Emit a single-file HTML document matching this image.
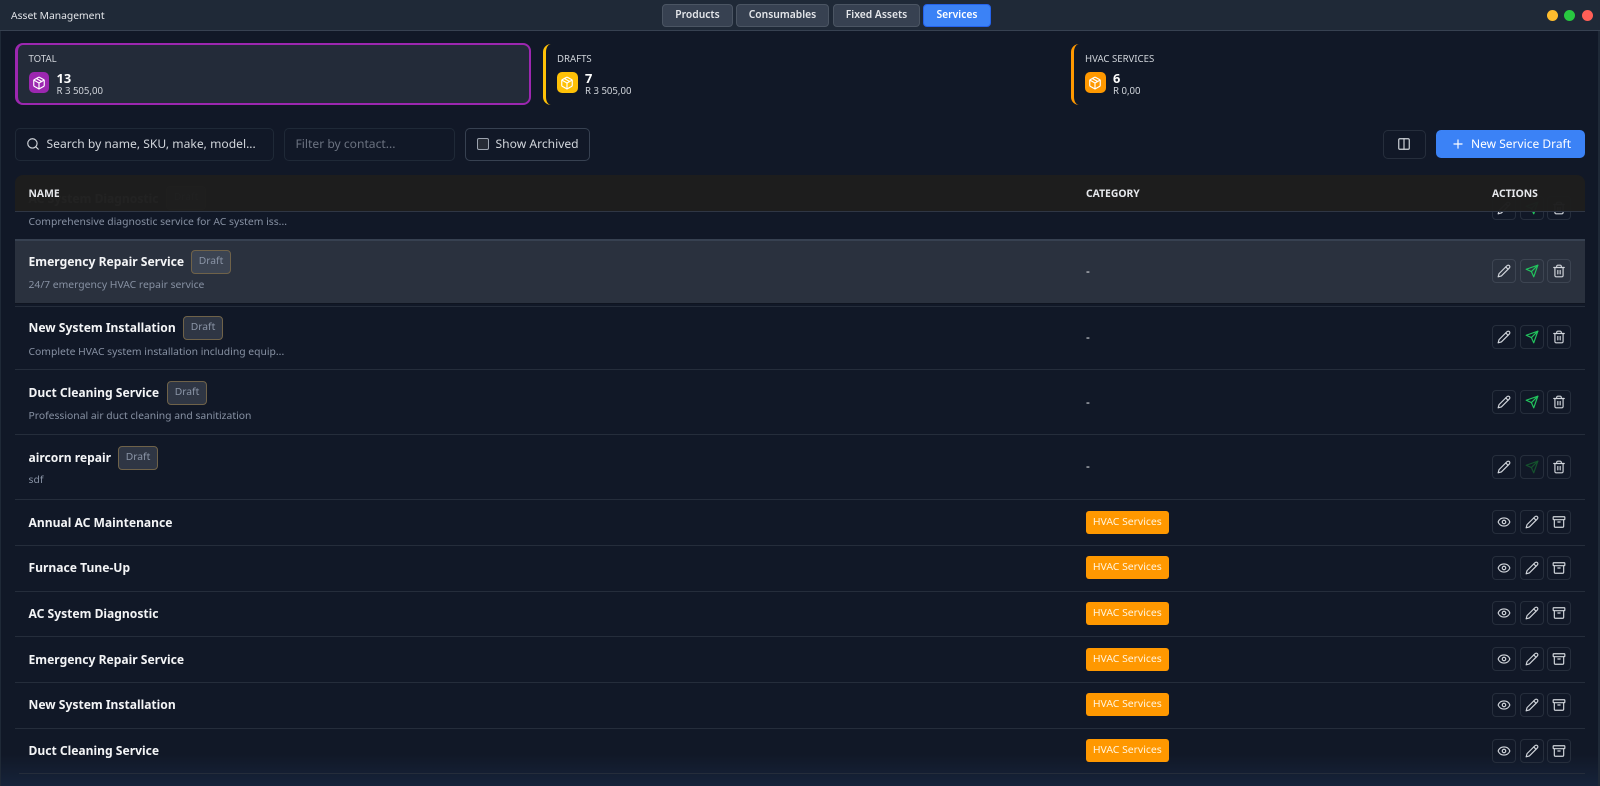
<!DOCTYPE html>
<html><head><meta charset="utf-8"><title>Asset Management</title>
<style>
*{box-sizing:border-box}
html,body{margin:0;padding:0;width:1600px;height:786px;overflow:hidden;background:#111827}
body{font-family:"Noto Sans","Noto Sans CJK JP","Liberation Sans",sans-serif;color:#f3f4f6;position:relative}
.a{position:absolute;white-space:nowrap}
.t{position:absolute;white-space:nowrap;line-height:20px;transform:translateY(-10px)}
#bg{left:0;top:0;width:1600px;height:786px;background:linear-gradient(#111827 0,#111827 96%,#16233a 100%);border-left:1px solid #1f2937;border-right:2px solid #1f2937}
#bar{left:0;top:0;width:1600px;height:31px;background:#1f2937;border-bottom:1px solid #374151}
.tab{position:absolute;top:3.5px;height:23px;border-radius:4px;background:#374151;border:1px solid #4b5563;color:#e5e7eb;font-size:10.3px;font-weight:600;text-align:center;line-height:21px}
.tab.on{background:#3b82f6;border-color:#2563eb;color:#fff}
.dot{position:absolute;top:10px;width:11px;height:11px;border-radius:50%}
.side{position:absolute;top:43.5px;width:16px;height:61px;border-left:3px solid;border-radius:8px 0 0 8px}
.ic{position:absolute;top:72px;width:20.5px;height:21px;border-radius:5px;display:flex;align-items:center;justify-content:center}
.lb{font-size:9.6px;color:#d1d5db}
.n{font-size:12.8px;font-weight:700;color:#fff}
.am{font-size:9.6px;color:#d1d5db}
.box{position:absolute;border:1px solid #1f2937;border-radius:5px;background:#111827}
.rl{position:absolute;left:15px;width:1570px;height:1px;background:#252d3b}
.nm{font-size:12.1px;font-weight:700;color:#f3f4f6;margin-top:.8px}
.ds{font-size:10.35px;color:#8791a3}
.dr{position:absolute;height:24px;border:1px solid #6f6249;border-radius:4px;background:#2f3644;color:#8a94a6;font-size:10.3px;text-align:center;line-height:21px;width:40px}
.cat{position:absolute;left:1085.8px;width:83px;height:23px;background:#ff9800;border-radius:3px;color:#fff5e0;font-size:10.4px;text-align:center;line-height:23px}
.bt{position:absolute;width:24px;height:24px;border:1px solid #262e3c;border-radius:4px;display:flex;align-items:center;justify-content:center;color:#d1d5db}
svg{display:block;fill:none;stroke:currentColor;stroke-width:2;stroke-linecap:round;stroke-linejoin:round}
.h{font-size:10.35px;font-weight:700;color:#e5e7eb}
</style></head><body>
<svg width="0" height="0" style="position:absolute">
<symbol id="pk" viewBox="0 0 24 24"><path d="M11 21.73a2 2 0 0 0 2 0l7-4A2 2 0 0 0 21 16V8a2 2 0 0 0-1-1.73l-7-4a2 2 0 0 0-2 0l-7 4A2 2 0 0 0 3 8v8a2 2 0 0 0 1 1.73z"/><path d="M12 22V12"/><path d="m3.3 7 8.7 5 8.7-5"/><path d="m7.5 4.27 9 5.15"/></symbol>
<symbol id="pe" viewBox="0 0 24 24"><path d="M17 3a2.85 2.83 0 1 1 4 4L7.5 20.5 2 22l1.5-5.5Z"/><path d="m15 5 4 4"/></symbol>
<symbol id="se" viewBox="0 0 24 24"><path d="m22 2-7 20-4-9-9-4Z"/><path d="M22 2 11 13"/></symbol>
<symbol id="tr" viewBox="0 0 24 24"><path d="M3 6h18"/><path d="M19 6v14c0 1-1 2-2 2H7c-1 0-2-1-2-2V6"/><path d="M8 6V4c0-1 1-2 2-2h4c1 0 2 1 2 2v2"/><path d="M10 11v6"/><path d="M14 11v6"/></symbol>
<symbol id="ey" viewBox="0 0 24 24"><path d="M2.062 12.348a1 1 0 0 1 0-.696 10.75 10.75 0 0 1 19.876 0 1 1 0 0 1 0 .696 10.75 10.75 0 0 1-19.876 0"/><circle cx="12" cy="12" r="3"/></symbol>
<symbol id="ar" viewBox="0 0 24 24"><rect x="2" y="3" width="20" height="5" rx="1"/><path d="M4 8v11a2 2 0 0 0 2 2h12a2 2 0 0 0 2-2V8"/><path d="M10 12h4"/></symbol>
</svg>
<div class="a" id="bg"></div>

<!-- scrolled row under sticky header -->
<div class="t nm" style="left:28.5px;top:198px">AC System Diagnostic</div>
<div class="dr" style="left:166px;top:186px">Draft</div>
<div class="t ds" style="left:28.5px;top:222px">Comprehensive diagnostic service for AC system iss...</div>
<div class="bt" style="left:1491.5px;top:196px"><svg width="14" height="14"><use href="#pe"/></svg></div>
<div class="bt" style="left:1519.5px;top:196px;color:#22c55e"><svg width="14" height="14"><use href="#se"/></svg></div>
<div class="bt" style="left:1547px;top:196px"><svg width="14" height="14"><use href="#tr"/></svg></div>

<!-- title bar -->
<div class="a" id="bar"></div>
<div class="t" style="left:11px;top:15.5px;font-size:10.3px;color:#e5e7eb">Asset Management</div>
<div class="tab" style="left:662px;width:71px">Products</div>
<div class="tab" style="left:736px;width:93px">Consumables</div>
<div class="tab" style="left:833px;width:87px">Fixed Assets</div>
<div class="tab on" style="left:923px;width:68px">Services</div>
<div class="dot" style="left:1547px;background:#febc2e"></div>
<div class="dot" style="left:1564px;background:#28c840"></div>
<div class="dot" style="left:1581.5px;background:#ff5f57"></div>

<!-- stat cards -->
<div class="a" style="left:15px;top:43px;width:516px;height:62px;background:#232b39;border:2px solid #9c27b0;border-left-width:3px;border-radius:8px"></div>
<div class="t lb" style="left:28.5px;top:59px">TOTAL</div>
<div class="ic" style="left:28.5px;background:#9c27b0;color:#fff"><svg width="14" height="14"><use href="#pk"/></svg></div>
<div class="t n" style="left:56.5px;top:77.5px">13</div>
<div class="t am" style="left:56.5px;top:91px">R 3 505,00</div>

<div class="side" style="left:543px;border-color:#ffc107"></div>
<div class="t lb" style="left:557px;top:59px">DRAFTS</div>
<div class="ic" style="left:557px;background:#ffc107;color:#fff"><svg width="14" height="14"><use href="#pk"/></svg></div>
<div class="t n" style="left:585px;top:77.5px">7</div>
<div class="t am" style="left:585px;top:91px">R 3 505,00</div>

<div class="side" style="left:1071px;border-color:#ff9800"></div>
<div class="t lb" style="left:1085px;top:59px">HVAC SERVICES</div>
<div class="ic" style="left:1085px;background:#ff9800;color:#fff"><svg width="14" height="14"><use href="#pk"/></svg></div>
<div class="t n" style="left:1113px;top:77.5px">6</div>
<div class="t am" style="left:1113px;top:91px">R 0,00</div>

<!-- toolbar -->
<div class="box" style="left:15px;top:127.5px;width:258.5px;height:33px"></div>
<svg class="a" style="left:26px;top:137px;color:#d1d5db" width="14" height="14" viewBox="0 0 24 24"><path d="m21 21-4.34-4.34"/><circle cx="11" cy="11" r="8"/></svg>
<div class="t" style="left:46.5px;top:144px;font-size:12.1px;color:#d1d5db">Search by name, SKU, make, model...</div>
<div class="box" style="left:284px;top:127.5px;width:171px;height:33px"></div>
<div class="t" style="left:295.5px;top:144px;font-size:12.1px;color:#6b7280">Filter by contact...</div>
<div class="box" style="left:465px;top:127.5px;width:125px;height:33px;border-color:#374151"></div>
<div class="a" style="left:476.5px;top:138px;width:12px;height:12px;border:1px solid #9ca3af;border-radius:2px;background:#262b35"></div>
<div class="t" style="left:495.5px;top:144px;font-size:12.1px;color:#d1d5db">Show Archived</div>
<div class="box" style="left:1382.5px;top:129.5px;width:43px;height:29.5px;border-color:#262e3c"></div>
<svg class="a" style="left:1397px;top:137px;color:#d1d5db" width="14" height="14" viewBox="0 0 24 24"><rect x="3" y="3" width="18" height="18" rx="2"/><path d="M12 3v18"/></svg>
<div class="a" style="left:1436px;top:130px;width:149px;height:28px;background:#3b82f6;border-radius:5px"></div>
<svg class="a" style="left:1451px;top:137px;color:#fff" width="14" height="14" viewBox="0 0 24 24"><path d="M5 12h14"/><path d="M12 5v14"/></svg>
<div class="t" style="left:1471px;top:144px;font-size:12px;color:#fff">New Service Draft</div>

<!-- table header -->
<div class="a" style="left:15px;top:175px;width:1570px;height:36.5px;background:rgba(30,30,30,.98);border-bottom:1px solid #2f3644;border-radius:8px 8px 0 0"></div>
<div class="t h" style="left:28.5px;top:193.5px">NAME</div>
<div class="t h" style="left:1086px;top:193.5px">CATEGORY</div>
<div class="t h" style="left:1492px;top:193.5px">ACTIONS</div>

<!-- highlighted row -->
<div class="a" style="left:15px;top:238.5px;width:1570px;height:65px;background:#2a313e;border-top:2px solid #374151;border-bottom:1px solid #0f1420"></div>
<div class="rl" style="top:305.5px"></div>
<div class="t nm" style="left:28.5px;top:261px">Emergency Repair Service</div>
<div class="dr" style="left:191px;top:249.5px;background:#3c4452">Draft</div>
<div class="t ds" style="left:28.5px;top:285px">24/7 emergency HVAC repair service</div>
<div class="t" style="left:1086px;top:271px;font-size:12px">-</div>
<div class="bt" style="left:1491.5px;top:259px;border-color:#3d4552"><svg width="14" height="14"><use href="#pe"/></svg></div>
<div class="bt" style="left:1519.5px;top:259px;border-color:#3d4552;color:#22c55e"><svg width="14" height="14"><use href="#se"/></svg></div>
<div class="bt" style="left:1547px;top:259px;border-color:#3d4552"><svg width="14" height="14"><use href="#tr"/></svg></div>

<!-- draft rows -->
<div class="t nm" style="left:28.5px;top:327.5px">New System Installation</div>
<div class="dr" style="left:183px;top:316px">Draft</div>
<div class="t ds" style="left:28.5px;top:351.5px">Complete HVAC system installation including equip...</div>
<div class="t" style="left:1086px;top:337px;font-size:12px">-</div>
<div class="bt" style="left:1491.5px;top:325px"><svg width="14" height="14"><use href="#pe"/></svg></div>
<div class="bt" style="left:1519.5px;top:325px;color:#22c55e"><svg width="14" height="14"><use href="#se"/></svg></div>
<div class="bt" style="left:1547px;top:325px"><svg width="14" height="14"><use href="#tr"/></svg></div>
<div class="rl" style="top:369px"></div>

<div class="t nm" style="left:28.5px;top:392px">Duct Cleaning Service</div>
<div class="dr" style="left:167px;top:380.5px">Draft</div>
<div class="t ds" style="left:28.5px;top:415.5px">Professional air duct cleaning and sanitization</div>
<div class="t" style="left:1086px;top:402px;font-size:12px">-</div>
<div class="bt" style="left:1491.5px;top:390px"><svg width="14" height="14"><use href="#pe"/></svg></div>
<div class="bt" style="left:1519.5px;top:390px;color:#22c55e"><svg width="14" height="14"><use href="#se"/></svg></div>
<div class="bt" style="left:1547px;top:390px"><svg width="14" height="14"><use href="#tr"/></svg></div>
<div class="rl" style="top:434px"></div>

<div class="t nm" style="left:28.5px;top:457px">aircorn repair</div>
<div class="dr" style="left:118px;top:445.5px">Draft</div>
<div class="t ds" style="left:28.5px;top:480px">sdf</div>
<div class="t" style="left:1086px;top:466px;font-size:12px">-</div>
<div class="bt" style="left:1491.5px;top:454.5px"><svg width="14" height="14"><use href="#pe"/></svg></div>
<div class="bt" style="left:1519.5px;top:454.5px;color:#14532d"><svg width="14" height="14"><use href="#se"/></svg></div>
<div class="bt" style="left:1547px;top:454.5px"><svg width="14" height="14"><use href="#tr"/></svg></div>
<div class="rl" style="top:498.5px"></div>

<!-- published rows -->
<div class="t nm" style="left:28.5px;top:522px">Annual AC Maintenance</div>
<div class="cat" style="top:510.5px">HVAC Services</div>
<div class="bt" style="left:1491.5px;top:510px"><svg width="14" height="14"><use href="#ey"/></svg></div>
<div class="bt" style="left:1519.5px;top:510px"><svg width="14" height="14"><use href="#pe"/></svg></div>
<div class="bt" style="left:1547px;top:510px"><svg width="14" height="14"><use href="#ar"/></svg></div>
<div class="rl" style="top:544.5px"></div>

<div class="t nm" style="left:28.5px;top:567px">Furnace Tune-Up</div>
<div class="cat" style="top:556px">HVAC Services</div>
<div class="bt" style="left:1491.5px;top:555.5px"><svg width="14" height="14"><use href="#ey"/></svg></div>
<div class="bt" style="left:1519.5px;top:555.5px"><svg width="14" height="14"><use href="#pe"/></svg></div>
<div class="bt" style="left:1547px;top:555.5px"><svg width="14" height="14"><use href="#ar"/></svg></div>
<div class="rl" style="top:590.5px"></div>

<div class="t nm" style="left:28.5px;top:613px">AC System Diagnostic</div>
<div class="cat" style="top:602px">HVAC Services</div>
<div class="bt" style="left:1491.5px;top:601px"><svg width="14" height="14"><use href="#ey"/></svg></div>
<div class="bt" style="left:1519.5px;top:601px"><svg width="14" height="14"><use href="#pe"/></svg></div>
<div class="bt" style="left:1547px;top:601px"><svg width="14" height="14"><use href="#ar"/></svg></div>
<div class="rl" style="top:636px"></div>

<div class="t nm" style="left:28.5px;top:659px">Emergency Repair Service</div>
<div class="cat" style="top:647.5px">HVAC Services</div>
<div class="bt" style="left:1491.5px;top:647px"><svg width="14" height="14"><use href="#ey"/></svg></div>
<div class="bt" style="left:1519.5px;top:647px"><svg width="14" height="14"><use href="#pe"/></svg></div>
<div class="bt" style="left:1547px;top:647px"><svg width="14" height="14"><use href="#ar"/></svg></div>
<div class="rl" style="top:682px"></div>

<div class="t nm" style="left:28.5px;top:704.5px">New System Installation</div>
<div class="cat" style="top:693px">HVAC Services</div>
<div class="bt" style="left:1491.5px;top:692.5px"><svg width="14" height="14"><use href="#ey"/></svg></div>
<div class="bt" style="left:1519.5px;top:692.5px"><svg width="14" height="14"><use href="#pe"/></svg></div>
<div class="bt" style="left:1547px;top:692.5px"><svg width="14" height="14"><use href="#ar"/></svg></div>
<div class="rl" style="top:727.5px"></div>

<div class="t nm" style="left:28.5px;top:750px">Duct Cleaning Service</div>
<div class="cat" style="top:739px">HVAC Services</div>
<div class="bt" style="left:1491.5px;top:738.5px"><svg width="14" height="14"><use href="#ey"/></svg></div>
<div class="bt" style="left:1519.5px;top:738.5px"><svg width="14" height="14"><use href="#pe"/></svg></div>
<div class="bt" style="left:1547px;top:738.5px"><svg width="14" height="14"><use href="#ar"/></svg></div>
<div class="rl" style="top:773px;left:19px;width:1566px"></div>
</body></html>
